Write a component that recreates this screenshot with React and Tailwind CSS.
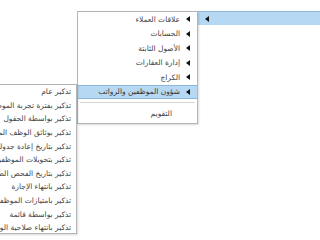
import React from "react";

const mainItems = [
  { label: "علاقات العملاء" },
  { label: "الحسابات" },
  { label: "الأصول الثابتة" },
  { label: "إدارة العقارات" },
  { label: "الكراج" },
  { label: "شؤون الموظفين والرواتب", active: true },
];

const reminders = [
  "تذكير عام",
  "تذكير بفترة تجربة الموظفين",
  "تذكير بواسطة الحقول",
  "تذكير بوثائق الوظف المنتهية",
  "تذكير بتاريخ إعادة جدولة",
  "تذكير بتحويلات الموظفين",
  "تذكير بتاريخ الفحص الطبي",
  "تذكير بانتهاء الإجازة",
  "تذكير بامتيازات الموظفين",
  "تذكير بواسطة قائمة",
  "تذكير بانتهاء صلاحية الوثائق",
];

function Arrow() {
  return (
    <svg width="4" height="6" viewBox="0 0 4 6" className="shrink-0">
      <path d="M0 3 L4 0 L4 6 Z" fill="#111" />
    </svg>
  );
}

export default function App() {
  return (
    <div
      dir="rtl"
      className="relative w-[320px] h-[240px] overflow-hidden bg-white text-[#444] text-[7.5px]"
      style={{ fontFamily: '"DejaVu Sans", sans-serif' }}
    >
      {/* top menu bar */}
      <div className="pt-[11px] flex">
        <div className="w-[123px] h-[14px] bg-[#b7d8f3] border-t border-[#8db6d9] border-l border-l-[#9a9a9a] flex items-center pr-[111px]">
          <Arrow />
        </div>
      </div>

      {/* second level menu */}
      <div className="absolute top-[11px] left-[77px] w-[121px] bg-white border border-[#b5b5b5] shadow-[1px_1px_2px_rgba(0,0,0,0.15)]">
        {mainItems.map((it) => (
          <div
            key={it.label}
            className={
              "h-[14.5px] flex items-center gap-[6px] pr-[7px] whitespace-nowrap " +
              (it.active ? "bg-[#b7d8f3] border-y border-[#8db6d9] text-[#333]" : "")
            }
          >
            <Arrow />
            <span>{it.label}</span>
          </div>
        ))}
        <div className="mx-[2px] my-[3px] h-px bg-[#d6d6d6]" />
        <div className="h-[16px] flex items-center pr-[25px] mb-[1px]">التقويم</div>
      </div>

      {/* third level menu */}
      <div className="absolute top-[84px] left-[-60px] w-[137px] h-[150px] bg-white border border-[#b5b5b5] overflow-hidden shadow-[1px_1px_2px_rgba(0,0,0,0.15)]">
        {reminders.map((r) => (
          <div key={r} className="h-[13.6px] flex items-center pr-[5px] whitespace-nowrap">
            {r}
          </div>
        ))}
      </div>
    </div>
  );
}
